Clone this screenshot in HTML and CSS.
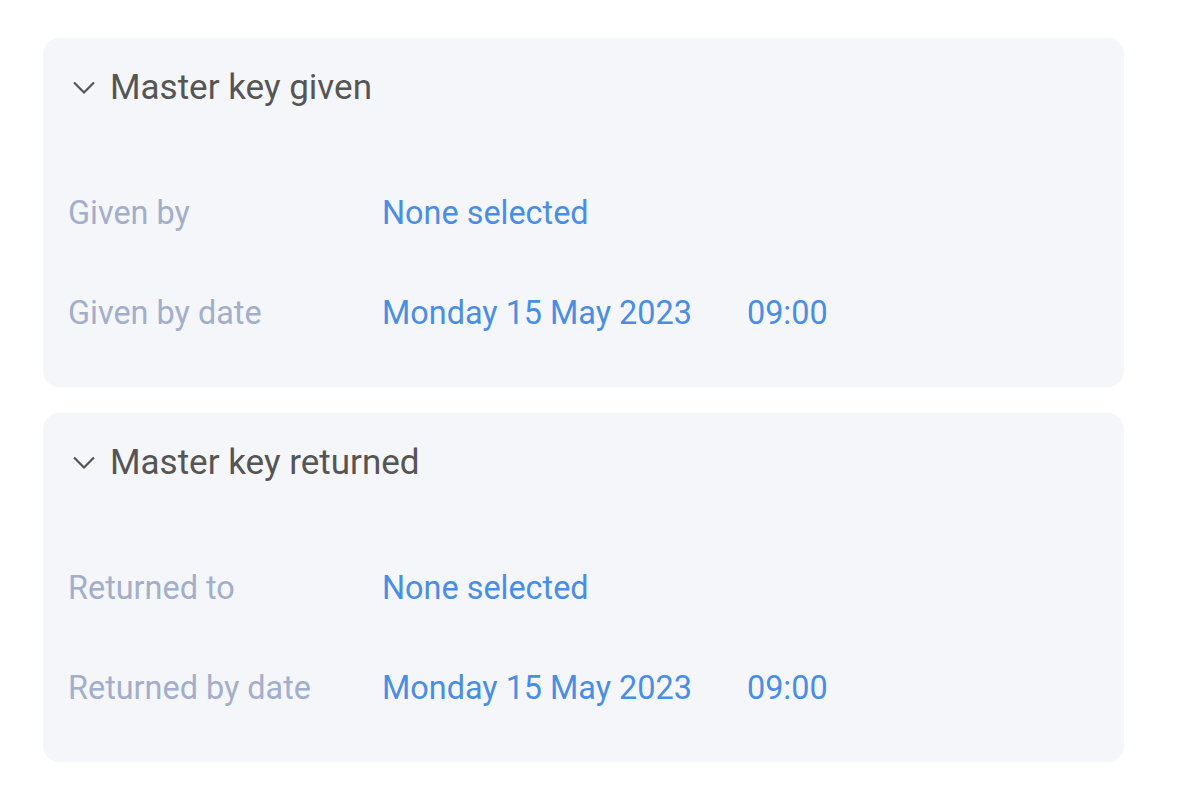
FILE: index.html
```html
<!DOCTYPE html>
<html lang="en">
<head>
    <meta charset="UTF-8">
    <meta name="viewport" content="width=device-width, initial-scale=1.0">
    <title>Master key</title>
    <link rel="stylesheet" href="styles.css">
</head>
<body>
    <div class="panels">
        <section class="panel">
            <h2 class="panel-title">
                <svg class="chevron" width="22" height="14" viewBox="0 0 22 14"><path d="M1 1.5 L11 11.5 L21 1.5" /></svg>
                Master key given
            </h2>
            <div class="row">
                <span class="label">Given by</span>
                <span class="value">None selected</span>
            </div>
            <div class="row">
                <span class="label">Given by date</span>
                <span class="value">Monday 15 May 2023</span>
                <span class="value time">09:00</span>
            </div>
        </section>

        <section class="panel">
            <h2 class="panel-title">
                <svg class="chevron" width="22" height="14" viewBox="0 0 22 14"><path d="M1 1.5 L11 11.5 L21 1.5" /></svg>
                Master key returned
            </h2>
            <div class="row">
                <span class="label">Returned to</span>
                <span class="value">None selected</span>
            </div>
            <div class="row">
                <span class="label">Returned by date</span>
                <span class="value">Monday 15 May 2023</span>
                <span class="value time">09:00</span>
            </div>
        </section>
    </div>
</body>
</html>
```

FILE: styles.css
```css
body {
    margin: 0;
    background: #fff;
    font-family: Roboto, "Liberation Sans", sans-serif;
}
.panels {
    display: flex;
    flex-direction: column;
    gap: 26px;
    width: 1081px;
    padding: 38px 0 0 43px;
}
.panel {
    background: #f5f6fa;
    border-radius: 16px;
    height: 349px;
    box-sizing: border-box;
    padding: 28px 25px 0 30px;
}
.panel-title {
    display: flex;
    align-items: center;
    gap: 15px;
    margin: 0 0 83px;
    font-size: 35px;
    font-weight: 400;
    line-height: 44px;
    color: #555;
}
.chevron {
    fill: none;
    stroke: #555;
    stroke-width: 2.2;
}
.row {
    display: flex;
    align-items: baseline;
    height: 100px;
    font-size: 32.4px;
    line-height: 40px;
    margin-left: -5px;
}
.label {
    width: 314px;
    color: #a3aecb;
}
.value {
    color: #4a8ee4;
}
.time {
    margin-left: 55px;
}
```
